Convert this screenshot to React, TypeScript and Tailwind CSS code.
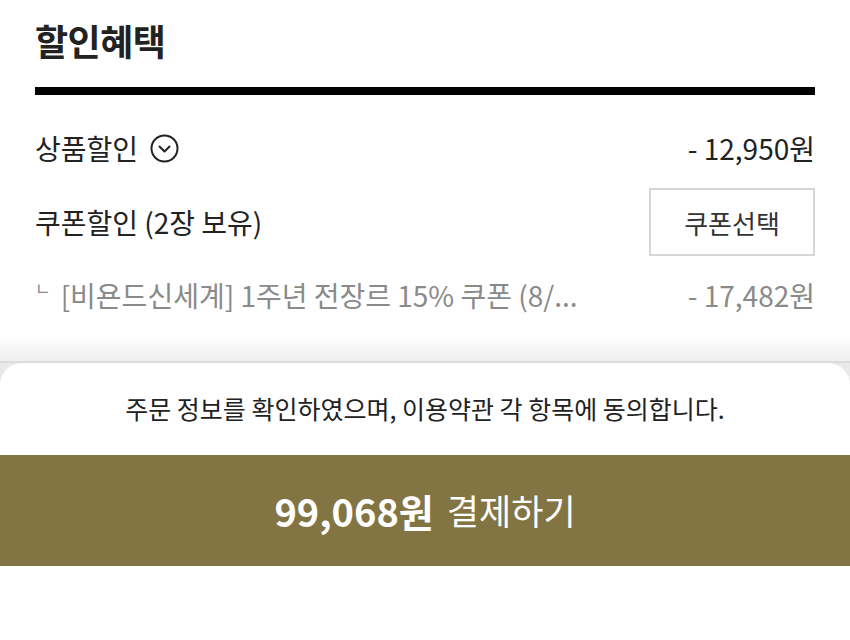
import React from 'react';

const FONT = { fontFamily: '"Noto Sans CJK KR", "Noto Sans", sans-serif' };

function CircleChevron() {
  return (
    <svg width="29" height="29" viewBox="0 0 29 29" fill="none" aria-hidden>
      <circle cx="14.5" cy="14.5" r="13" stroke="#222" strokeWidth="2" />
      <path d="M9.5 12.5 L14.5 17.5 L19.5 12.5" stroke="#222" strokeWidth="2" strokeLinecap="round" strokeLinejoin="round" />
    </svg>
  );
}

export default function App() {
  return (
    <div className="w-[850px] h-[640px] bg-white overflow-hidden flex flex-col" style={FONT}>
      <div className="px-[35px]">
        <h2 className="pt-[18px] h-[62px] text-[36px] leading-[44px] font-bold text-[#222] tracking-[-0.5px]">할인혜택</h2>
        <div className="mt-[25px] h-[8px] bg-black" />

        <div className="mt-[36px] h-[34px] flex items-center justify-between">
          <div className="flex items-center gap-[12px]">
            <span className="text-[28px] leading-[34px] text-[#222]">상품할인</span>
            <CircleChevron />
          </div>
          <span className="text-[28px] leading-[34px] text-[#222]">- 12,950원</span>
        </div>

        <div className="mt-[23px] h-[68px] flex items-center justify-between">
          <span className="text-[28px] leading-[34px] text-[#222]">쿠폰할인 (2장 보유)</span>
          <button
            type="button"
            className="w-[166px] h-[68px] border-2 border-[#d6d6d6] bg-white text-[26px] text-[#333]">
            쿠폰선택
          </button>
        </div>

        <div className="mt-[22px] h-[34px] flex items-center justify-between">
          <span className="flex items-center text-[28px] leading-[34px] text-[#8a8a8a] whitespace-nowrap">
            <span className="text-[17px] leading-[20px] self-start mt-[0px] mr-[10px]">ㄴ</span>
            [비욘드신세계] 1주년 전장르 15% 쿠폰 (8/...
          </span>
          <span className="text-[28px] leading-[34px] text-[#8a8a8a]">- 17,482원</span>
        </div>
      </div>

      <div className="mt-[23px] h-[26px] bg-gradient-to-b from-white to-[#efefef]" />
      <div className="h-[2px] bg-[#dcdcdc]" />

      <div className="flex-1 bg-[#e9e9e9] flex flex-col">
        <div className="flex-1 bg-white rounded-t-[22px] flex flex-col">
          <p className="h-[92px] flex items-center justify-center text-[25px] text-[#222]">
            주문 정보를 확인하였으며, 이용약관 각 항목에 동의합니다.
          </p>
          <button
            type="button"
            className="h-[111px] w-full bg-[#837543] flex items-center justify-center gap-[13px] text-white">
            <span className="text-[38px] font-bold">99,068원</span>
            <span className="text-[35px]">결제하기</span>
          </button>
        </div>
      </div>
    </div>
  );
}
